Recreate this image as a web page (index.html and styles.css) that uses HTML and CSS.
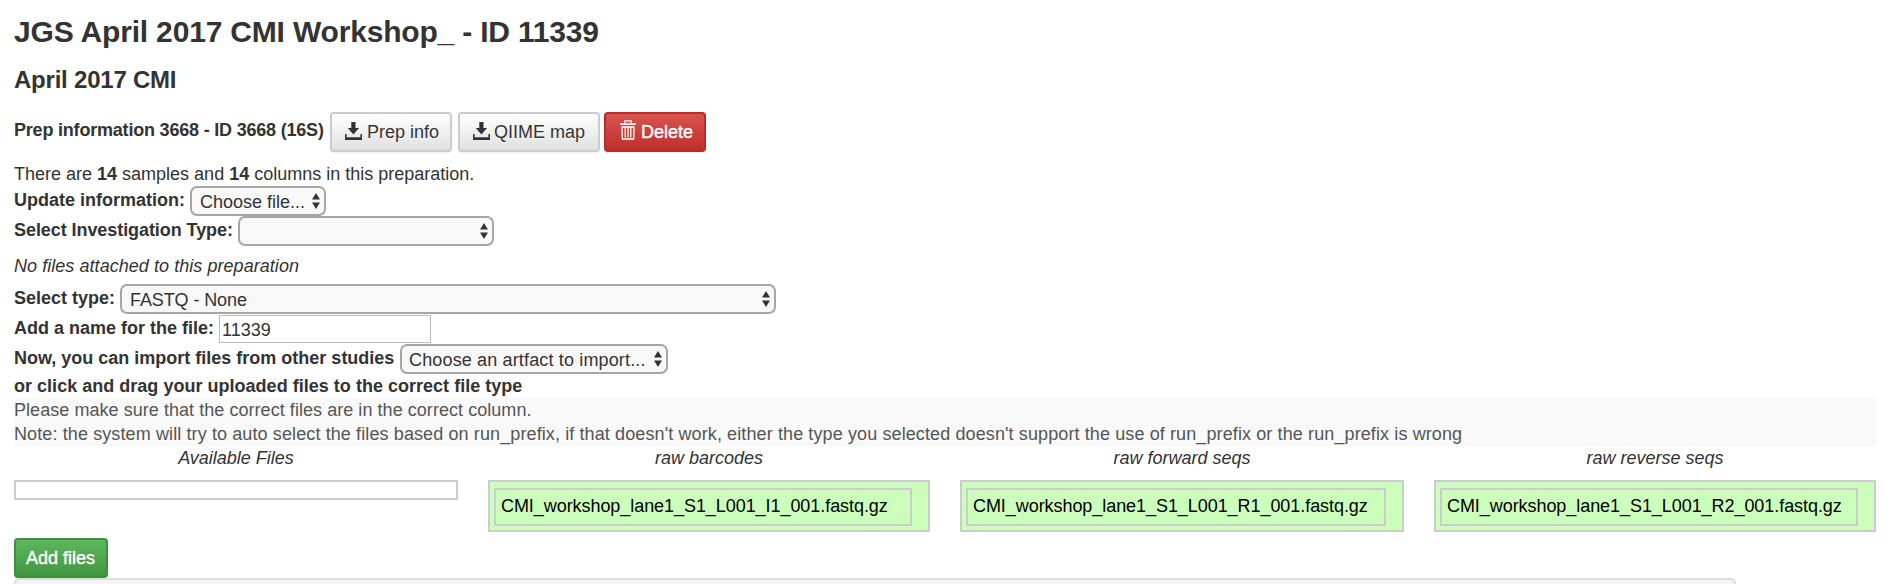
FILE: index.html
```html
<!DOCTYPE html>
<html lang="en">
<head>
<meta charset="utf-8">
<title>Study 11339</title>
<link rel="stylesheet" href="styles.css">
</head>
<body>
<svg class="defs" width="0" height="0">
  <symbol id="download" viewBox="0 0 17 18"><path d="M6.300 0h4.200v6h3.600L8.400 12.600 2.700 6h3.600z M0 12h1.600v3.200h13.800V12H17v6H0z"/></symbol>
  <symbol id="trash" viewBox="0 0 16 20"><path fill="none" stroke="currentColor" stroke-width="1.300" d="M4.800 3.500V.8h6.400v2.700M2 7l.3 12h11.400L14 7M5.200 7v10.500M8 7v10.500M10.800 7v10.500M1.500 7h13"/><path fill="currentColor" d="M0 3.300h16v1.600H0z"/></symbol>
  <symbol id="updown" viewBox="0 0 8 16"><path d="M4 0l4 6.600H0zM4 16l4-6.600H0z"/></symbol>
</svg>
<main class="page">
  <h3 class="title">JGS April 2017 CMI Workshop_ - ID 11339</h3>
  <h4 class="subtitle">April 2017 CMI</h4>
  <div class="prep">
    <span class="prep-label">Prep information 3668 - ID 3668 (16S)</span>
    <a class="btn btn-prep"><svg class="ico-dl"><use href="#download"/></svg>Prep info</a>
    <a class="btn btn-map"><svg class="ico-dl"><use href="#download"/></svg>QIIME map</a>
    <a class="btn btn-delete"><svg class="ico-trash"><use href="#trash"/></svg>Delete</a>
  </div>
  <p class="summary">There are <b>14</b> samples and <b>14</b> columns in this preparation.</p>
  <div class="row"><b class="label w-update">Update information:</b><div class="select s-file">Choose file...<svg class="arrows"><use href="#updown"/></svg></div></div>
  <div class="row"><b class="label w-inv">Select Investigation Type:</b><div class="select s-inv"><svg class="arrows"><use href="#updown"/></svg></div></div>
  <p class="nofiles">No files attached to this preparation</p>
  <div class="row"><b class="label w-type">Select type:</b><div class="select s-type">FASTQ - None<svg class="arrows"><use href="#updown"/></svg></div></div>
  <div class="row"><b class="label w-name">Add a name for the file:</b><div class="input">11339</div></div>
  <div class="row"><b class="label w-import">Now, you can import files from other studies</b><div class="select s-import">Choose an artfact to import...<svg class="arrows"><use href="#updown"/></svg></div></div>
  <b class="drag">or click and drag your uploaded files to the correct file type</b>
  <div class="note">
    <div class="note-short">Please make sure that the correct files are in the correct column.</div>
    <div>Note: the system will try to auto select the files based on run_prefix, if that doesn't work, either the type you selected doesn't support the use of run_prefix or the run_prefix is wrong</div>
  </div>
  <div class="columns">
    <section><h5>Available Files</h5><div class="drop empty"></div></section>
    <section><h5>raw barcodes</h5><div class="drop"><div class="file">CMI_workshop_lane1_S1_L001_I1_001.fastq.gz</div></div></section>
    <section><h5>raw forward seqs</h5><div class="drop"><div class="file">CMI_workshop_lane1_S1_L001_R1_001.fastq.gz</div></div></section>
    <section><h5>raw reverse seqs</h5><div class="drop"><div class="file">CMI_workshop_lane1_S1_L001_R2_001.fastq.gz</div></div></section>
  </div>
  <a class="btn btn-add">Add files</a>
  <div class="panel"></div>
</main>
</body>
</html>
```
FILE: styles.css
```css
* { box-sizing: border-box; }
body { margin: 0; background: #fff; color: #333; font: 18px/24px "Liberation Sans", Arial, sans-serif; white-space: nowrap; overflow: hidden; }
h3, h4, h5, p { margin: 0; }
.defs { position: absolute; }
.page { height: 584px; padding: 12px 26px 0 14px; overflow: hidden; }
.title { font-size: 30px; line-height: 40px; letter-spacing: -.18px; }
.subtitle { margin-top: 12px; font-size: 24px; line-height: 32px; letter-spacing: -.22px; }
.prep { display: flex; height: 40px; margin-top: 16px; }
.prep-label { width: 316px; line-height: 36px; font-weight: bold; letter-spacing: -.2px; }
.btn { display: flex; align-items: center; height: 40px; padding-left: 12px; border: 2px solid #ccc; border-radius: 4px; background: linear-gradient(#fff, #e0e0e0); box-shadow: 0 1px 2px rgba(0, 0, 0, .08); text-shadow: 0 1px 0 #fff; }
.btn-prep { width: 122px; padding-left: 13px; }
.btn-map { width: 142px; margin-left: 6px; padding-left: 13px; }
.btn-delete { width: 102px; margin-left: 4px; padding-left: 14px; border-color: #b92c28; background: linear-gradient(#d9534f, #c12e2a); color: #fff; text-shadow: 0 -1px 0 rgba(0, 0, 0, .2); -webkit-text-stroke: .4px #fff; }
.ico-dl { width: 17px; height: 18px; margin: -2px 4px 0 0; fill: #333; }
.btn-prep .ico-dl { margin-right: 5px; }
.ico-trash { width: 16px; height: 20px; margin: -4px 5px 0 0; }
.summary { margin-top: 10px; }
.row { display: flex; height: 30px; }
.label { line-height: 28px; }
.w-update { width: 176px; }
.w-inv { width: 224px; letter-spacing: -.07px; }
.w-type { width: 106px; }
.w-name { width: 205px; }
.w-import { width: 386px; }
.select { display: flex; height: 30px; padding: 1px 4px 0 8px; border: 2px solid #a6a6a6; border-radius: 7px; background: #f8f8f8; line-height: 26px; }
.s-file { width: 136px; }
.s-inv { width: 256px; }
.s-type { width: 656px; letter-spacing: -.1px; }
.s-import { width: 268px; padding-left: 7px; letter-spacing: .15px; }
.arrows { flex: none; width: 8px; height: 16px; margin: 4px 0 0 auto; fill: #333; }
.input { width: 212px; height: 28px; margin-top: 1px; padding-left: 2px; border: 1px solid #bbb; line-height: 28px; }
.nofiles { margin: 8px 0 6px; font-style: italic; letter-spacing: .05px; }
.drag { display: block; letter-spacing: .02px; }
.note { width: 1862px; background: #f9f9f9; color: #555; letter-spacing: .11px; }
.note-short { letter-spacing: .05px; }
.columns { display: grid; grid-template-columns: 444px 442px 444px 442px; column-gap: 30px; height: 92px; }
h5 { font-size: 18px; font-weight: normal; font-style: italic; text-align: center; }
.drop { height: 52px; margin-top: 10px; padding: 6px 16px 0 4px; border: 2px solid #ccc; background: #cfb; }
.empty { height: 20px; background: #fff; }
.file { height: 38px; padding-left: 5px; border: 2px solid #ccc; color: #000; line-height: 33px; letter-spacing: -.06px; }
.btn-add { width: 94px; padding-left: 10px; border-color: #3e8f3e; background: linear-gradient(#5cb85c, #419641); color: #fff; text-shadow: 0 -1px 0 rgba(0, 0, 0, .2); -webkit-text-stroke: .4px #fff; }
.panel { width: 1722px; height: 20px; border: 2px solid #ddd; border-radius: 5px; background: #f5f5f5; }
```
